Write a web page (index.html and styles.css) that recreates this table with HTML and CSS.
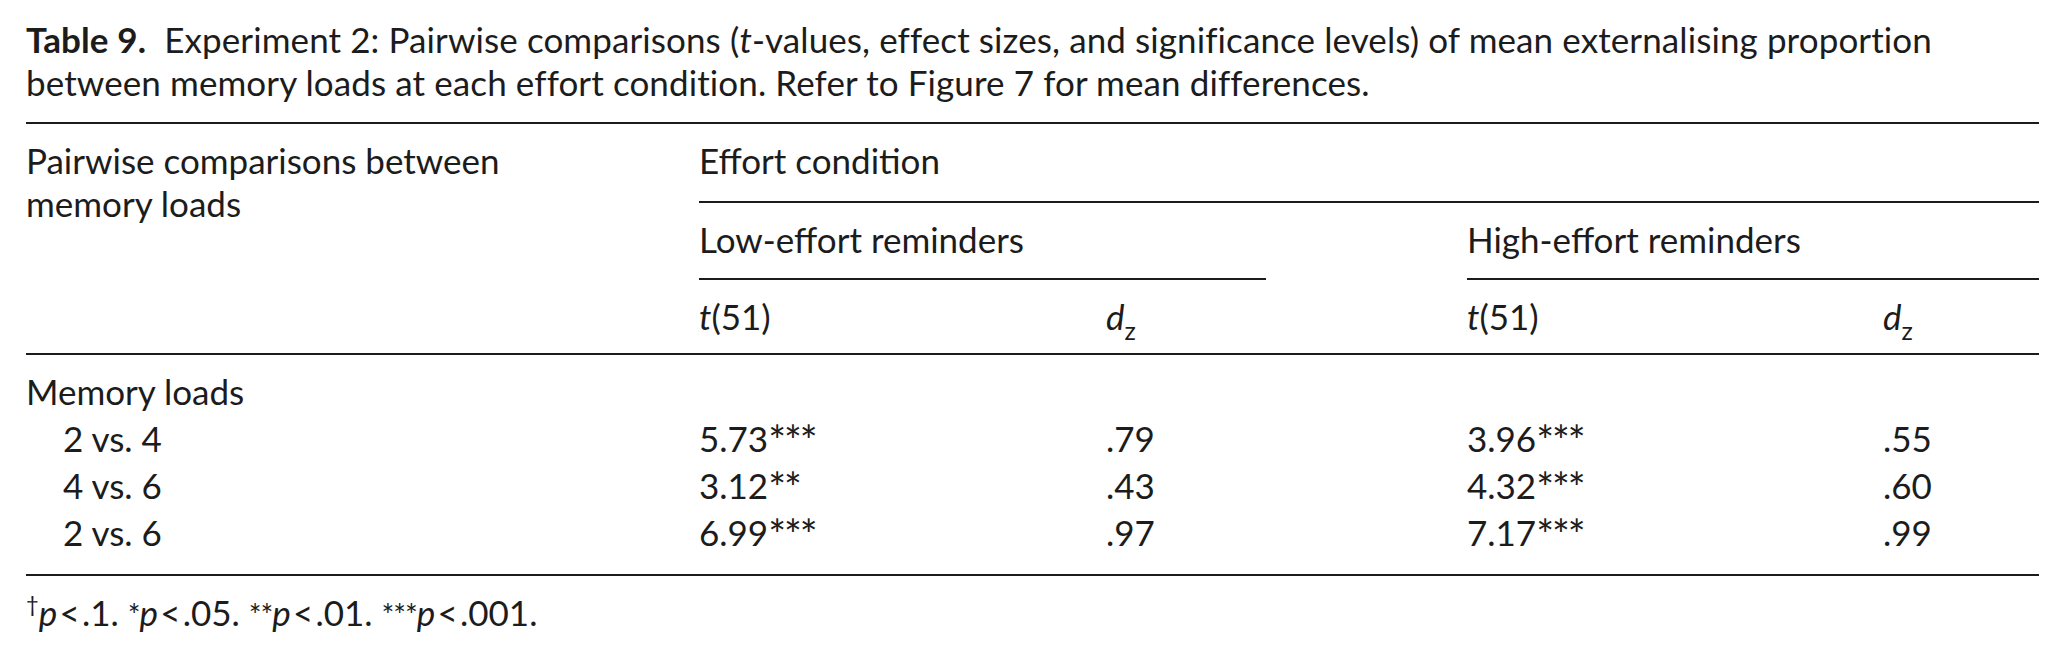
FILE: index.html
```html
<!DOCTYPE html>
<html lang="en">
<head>
<meta charset="utf-8">
<title>Table 9</title>
<link rel="stylesheet" href="styles.css">
</head>
<body>
<div class="page">
  <div class="caption"><span class="label">Table 9.</span>&nbsp; Experiment 2: Pairwise comparisons (<i>t</i>-values, effect sizes, and significance levels) of mean externalising proportion<br>between memory loads at each effort condition. Refer to Figure 7 for mean differences.</div>

  <div class="head">
    <div class="stub">Pairwise comparisons between<br>memory loads</div>
    <div class="effort">Effort condition</div>
    <div class="low"><span class="low-rule">Low-effort reminders</span></div>
    <div class="high">High-effort reminders</div>
    <div class="c2"><i>t</i>(51)</div>
    <div class="c3"><i>d</i><sub>z</sub></div>
    <div class="c4"><i>t</i>(51)</div>
    <div class="c5"><i>d</i><sub>z</sub></div>
  </div>

  <div class="body">
    <div class="row"><div class="cell first">Memory loads</div><div class="cell"></div><div class="cell"></div><div class="cell"></div><div class="cell"></div></div>
    <div class="row"><div class="cell first indent">2 vs. 4</div><div class="cell">5.73<span class="sig">***</span></div><div class="cell">.79</div><div class="cell">3.96<span class="sig">***</span></div><div class="cell">.55</div></div>
    <div class="row"><div class="cell first indent">4 vs. 6</div><div class="cell">3.12<span class="sig">**</span></div><div class="cell">.43</div><div class="cell">4.32<span class="sig">***</span></div><div class="cell">.60</div></div>
    <div class="row"><div class="cell first indent">2 vs. 6</div><div class="cell">6.99<span class="sig">***</span></div><div class="cell">.97</div><div class="cell">7.17<span class="sig">***</span></div><div class="cell">.99</div></div>
  </div>

  <div class="note"><sup class="dag">†</sup><i>p</i>&#8202;&lt;&#8202;.1. <span class="sig-s">*</span><i>p</i>&#8202;&lt;&#8202;.05. <span class="sig-s">**</span><i>p</i>&#8202;&lt;&#8202;.01. <span class="sig-s">***</span><i>p</i>&#8202;&lt;&#8202;.001.</div>
</div>
</body>
</html>
```

FILE: styles.css
```css
html, body {
  margin: 0;
  padding: 0;
  background: #ffffff;
}

body {
  font-family: "Lato", "Open Sans", sans-serif;
  font-size: 35px;
  color: #1c1c1c;
}

.page {
  width: 2013px;
  padding: 18px 0 0 26px;
}

.caption {
  line-height: 43px;
  white-space: nowrap;
  padding-bottom: 18px;
  letter-spacing: 0.1px;
}

.label {
  font-weight: 700;
}

.head {
  display: grid;
  grid-template-columns: 673px 407px 361px 416px 156px;
  grid-template-rows: 79px 77px 73px;
  border-top: 2px solid #1c1c1c;
  border-bottom: 2px solid #1c1c1c;
  line-height: 43px;
}

.head > div {
  padding-top: 15px;
  white-space: nowrap;
}

.stub {
  grid-column: 1;
  grid-row: 1 / 4;
}

.effort {
  grid-column: 2 / 6;
  grid-row: 1;
  border-bottom: 2px solid #1c1c1c;
}

.low {
  grid-column: 2 / 4;
  grid-row: 2;
  padding-right: 201px;
}

.low .low-rule {
  display: block;
  height: 60px;
  border-bottom: 2px solid #1c1c1c;
}

.high {
  grid-column: 4 / 6;
  grid-row: 2;
  border-bottom: 2px solid #1c1c1c;
}

.c2 { grid-column: 2; grid-row: 3; }
.c3 { grid-column: 3; grid-row: 3; }
.c4 { grid-column: 4; grid-row: 3; }
.c5 { grid-column: 5; grid-row: 3; }

sub {
  font-size: 25px;
  line-height: 0;
  vertical-align: -10px;
}

.body {
  padding: 13px 0 18px;
  border-bottom: 2px solid #1c1c1c;
}

.row {
  display: grid;
  grid-template-columns: 673px 407px 361px 416px 156px;
  line-height: 47px;
  height: 47px;
}

.cell {
  white-space: nowrap;
}

.indent {
  padding-left: 37px;
}

.sig {
  font-size: 42px;
  line-height: 0;
  letter-spacing: -2px;
  vertical-align: -4px;
}

.sig-s {
  font-size: 30px;
  letter-spacing: -1px;
}

.note {
  line-height: 43px;
  padding-top: 15px;
  white-space: nowrap;
}

.dag {
  font-size: 22px;
  line-height: 0;
  vertical-align: 14px;
}
```
